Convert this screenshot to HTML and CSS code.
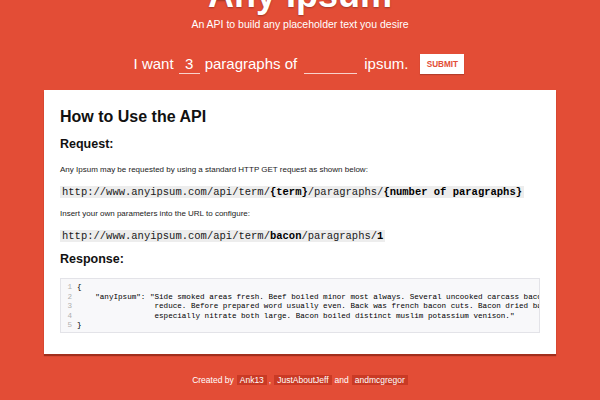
FILE: index.html
```html
<!DOCTYPE html>
<html lang="en">
<head>
<meta charset="utf-8">
<title>Any Ipsum</title>
<link rel="stylesheet" href="styles.css">
</head>
<body>
<header class="hero">
  <h1 class="title">Any Ipsum</h1>
  <p class="tagline">An API to build any placeholder text you desire</p>
  <form class="want">
    <span>I want</span>
    <input class="field field-num" type="text" value="3">
    <span>paragraphs of</span>
    <input class="field field-term" type="text" value="">
    <span>ipsum.</span>
    <button class="submit" type="button">SUBMIT</button>
  </form>
</header>

<main class="card">
  <h2 class="card-title">How to Use the API</h2>
  <h3 class="section section-request">Request:</h3>
  <p class="note note-first">Any Ipsum may be requested by using a standard HTTP GET request as shown below:</p>
  <div class="url-row"><code class="url">http://www.anyipsum.com/api/term/<b>{term}</b>/paragraphs/<b>{number of paragraphs}</b></code></div>
  <p class="note">Insert your own parameters into the URL to configure:</p>
  <div class="url-row"><code class="url">http://www.anyipsum.com/api/term/<b>bacon</b>/paragraphs/<b>1</b></code></div>
  <h3 class="section section-response">Response:</h3>
  <div class="json">
    <ol class="gutter"><li>1</li><li>2</li><li>3</li><li>4</li><li>5</li></ol>
<pre class="json-code">{
    "anyIpsum": "Side smoked areas fresh. Beef boiled minor most always. Several uncooked carcass bacon tastes
                 reduce. Before prepared word usually even. Back was french bacon cuts. Bacon dried bacon
                 especially nitrate both large. Bacon boiled distinct muslim potassium venison."
}</pre>
  </div>
</main>

<footer class="credits">
  <span>Created by</span>
  <a class="tag">Ank13</a><span class="comma">,</span>
  <a class="tag">JustAboutJeff</a>
  <span>and</span>
  <a class="tag">andmcgregor</a>
</footer>
</body>
</html>
```
FILE: styles.css
```css
html, body {
  margin: 0;
  padding: 0;
}
body {
  background: #e34d36;
  font-family: "Liberation Sans", Arial, Helvetica, sans-serif;
  color: #fff;
  width: 600px;
  height: 400px;
  overflow: hidden;
}

.hero {
  display: flex;
  flex-direction: column;
  align-items: center;
}
.title {
  margin: -25px 0 0;
  font-size: 36px;
  line-height: 40px;
  font-weight: bold;
  text-shadow: 0 1px 2px rgba(0, 0, 0, 0.3);
}
.tagline {
  margin: 3px 0 0;
  font-size: 10.5px;
  line-height: 13px;
}
.want {
  margin: 23px 0 0;
  display: flex;
  align-items: center;
  gap: 5px;
  font-size: 15px;
  line-height: 20px;
  height: 20px;
  padding-right: 2px;
}
.field {
  background: transparent;
  border: 0;
  border-bottom: 1px solid rgba(255, 255, 255, 0.75);
  color: #fff;
  font: inherit;
  text-align: center;
  padding: 0;
  height: 19px;
  line-height: 19px;
  outline: none;
}
.field-num { width: 21px; }
.field-term { width: 53px; margin: 0 2px; }
.submit {
  margin-left: 7px;
  height: 20px;
  width: 44px;
  padding: 0;
  border: 0;
  background: #fff;
  color: #e34d36;
  font-family: "Liberation Sans", Arial, sans-serif;
  font-weight: bold;
  font-size: 8.2px;
  box-shadow: 0 1px 1px rgba(0, 0, 0, 0.2);
}

.card {
  box-sizing: border-box;
  width: 512px;
  height: 264px;
  margin: 16px auto 0;
  padding: 17px 16px 0;
  background: #fff;
  color: #111;
  box-shadow: 0 2px 1px rgba(80, 10, 0, 0.45);
  display: flex;
  flex-direction: column;
  align-items: flex-start;
}
.card-title {
  margin: 0;
  font-size: 16px;
  line-height: 20px;
}
.section {
  margin: 0;
  font-size: 12.5px;
  line-height: 16px;
}
.section-request { margin-top: 9px; }
.section-response { margin-top: 9px; }
.note {
  margin: 11px 0 0;
  font-size: 8px;
  line-height: 10px;
  color: #222;
}
.note-first { margin-top: 13px; }
.url-row {
  display: flex;
  margin-top: 11px;
}
.url {
  display: block;
  padding: 1px 2px;
  background: #ededed;
  font-family: "Liberation Mono", "Courier New", monospace;
  font-size: 10.5px;
  line-height: 10px;
  color: #1a1a1a;
  white-space: pre;
}
.url b { color: #000; }

.json {
  margin-top: 11px;
  box-sizing: border-box;
  width: 480px;
  display: flex;
  background: #f8f8fa;
  border: 1px solid #e3e3e8;
  padding: 4px 0 1px;
  overflow: hidden;
  font-family: "Liberation Mono", "Courier New", monospace;
  font-size: 7.6px;
  line-height: 9.5px;
}
.gutter {
  margin: 0;
  padding: 0;
  list-style: none;
  width: 11px;
  flex: none;
  color: #b0b0b0;
  text-align: right;
}
.json-code {
  margin: 0 0 0 5px;
  font: inherit;
  color: #000;
  white-space: pre;
}

.credits {
  margin-top: 21px;
  display: flex;
  justify-content: center;
  align-items: center;
  gap: 3px;
  font-size: 8.5px;
  line-height: 10px;
  color: #fff;
}
.tag {
  background: #c93a25;
  padding: 0 3px;
  color: #fff;
}
.comma { margin-left: -1px; }
```
